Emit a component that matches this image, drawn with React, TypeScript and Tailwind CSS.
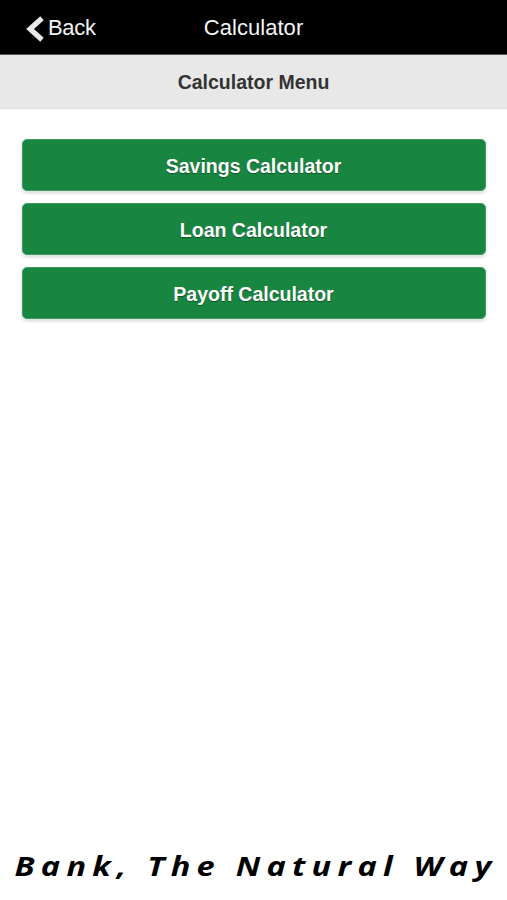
import React from 'react'

const calculators = ['Savings Calculator', 'Loan Calculator', 'Payoff Calculator']

const Header: React.FC = () => (
  <header className="grid h-[54px] grid-cols-[1fr_auto_1fr] items-center bg-black text-[22px] text-[#f4f4f4]">
    <button className="flex items-center pl-[26px]">
      <svg className="mt-1 mr-[3px] h-[26px] w-[19px]" viewBox="0 0 19 26" fill="none">
        <path d="M16 2.2 4 13l12 10.8" stroke="#e9e9e9" strokeWidth="5.2" />
      </svg>
      <span className="tracking-[-0.3px]">Back</span>
    </button>
    <h1 className="tracking-[0.05px]">Calculator</h1>
  </header>
)

const App: React.FC = () => {
  return (
    <div className="flex h-screen flex-col overflow-hidden bg-white font-['Liberation_Sans',Arial,sans-serif]">
      <Header />
      <h2 className="flex h-[55px] items-center justify-center border-t border-b border-t-[#555] border-b-[#dedede] bg-[#e8e8e8] pt-[3px] text-[19.5px] font-bold text-[#333]">
        Calculator Menu
      </h2>
      <main className="flex flex-1 flex-col gap-3 px-[21.5px] pt-[30px]">
        {calculators.map((name) => (
          <button
            key={name}
            className="h-[52px] rounded-[5px] border border-[#3f9b60] bg-[#188640] pt-[4px] text-[19.5px] font-bold text-white shadow-[0_2px_2px_1px_rgba(0,0,0,0.1)] [text-shadow:0_1px_1px_rgba(0,0,0,0.4)]"
          >
            {name}
          </button>
        ))}
      </main>
      <footer className="flex scale-x-125 justify-center pb-[15px] pl-[4px] font-['Open_Sans',sans-serif] text-[26px] leading-[38px] font-bold tracking-[5px] whitespace-nowrap text-black italic">
        Bank, The Natural Way
      </footer>
    </div>
  )
}

export default App
